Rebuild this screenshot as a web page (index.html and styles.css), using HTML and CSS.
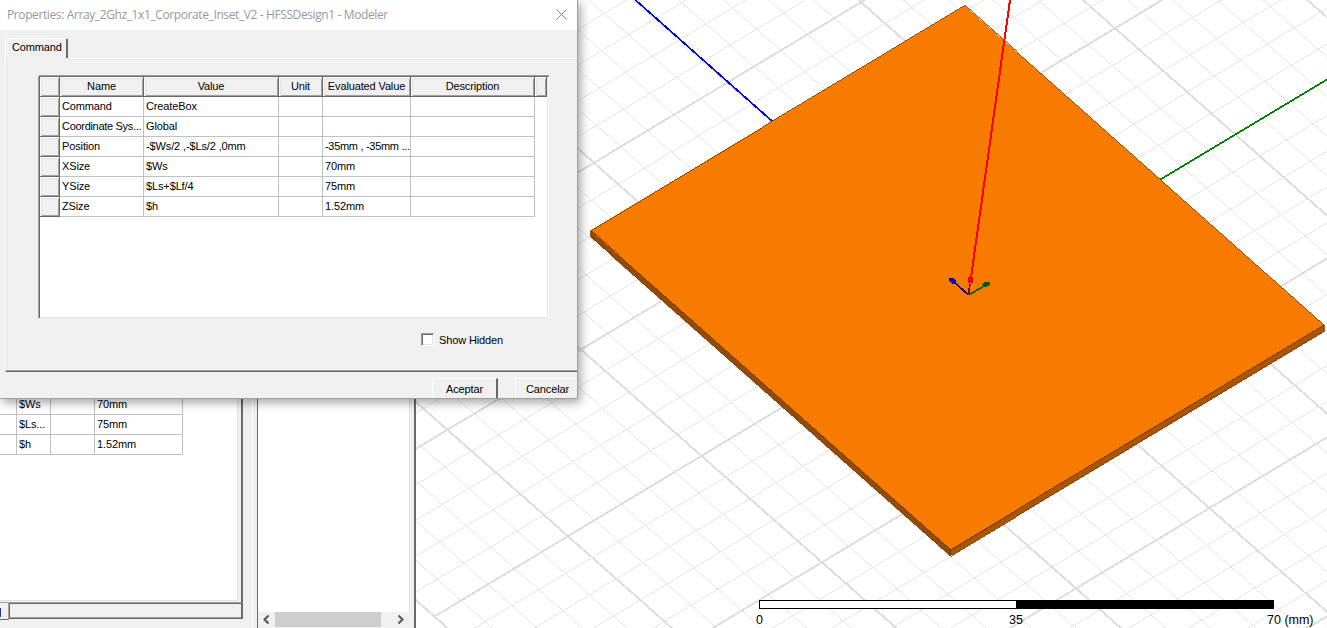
FILE: index.html
```html
<!DOCTYPE html>
<html lang="en">
<head>
<meta charset="utf-8">
<title>Modeler</title>
<link rel="stylesheet" href="styles.css">
</head>
<body>
<div class="app">
  <section class="props">
    <div class="props-page">
      <div class="mini">
        <i></i><span>$Ws</span><i></i><span>70mm</span>
        <i></i><span>$Ls...</span><i></i><span>75mm</span>
        <i></i><span>$h</span><i></i><span>1.52mm</span>
      </div>
    </div>
    <div class="props-foot"><div class="foot-tab"><b></b></div><div class="foot-bar"></div></div>
  </section>
  <div class="splitter"></div>
  <section class="output">
    <div class="output-page"></div>
    <div class="scroll">
      <svg width="17" height="15" viewBox="0 0 17 15"><path d="M10.500 3.500 6.500 7.500 10.500 11.500"/></svg>
      <div class="thumb"></div>
      <svg width="17" height="15" viewBox="0 0 17 15"><path d="M6.500 3.500 10.500 7.500 6.500 11.500"/></svg>
    </div>
  </section>
  <section class="view">
    <svg class="scene" width="911" height="628" viewBox="416 0 911 628">
      <g class="grid" transform="matrix(24.1 21.28 26.7 -16.06 968.5 295.3)">
        <path class="minor" d="M-20-20h40m-40 1h40m-40 1h40m-40 1h40m-40 1h40m-40 1h40m-40 1h40m-40 1h40m-40 1h40m-40 1h40m-40 1h40m-40 1h40m-40 1h40m-40 1h40m-40 1h40m-40 1h40m-40 1h40m-40 1h40m-40 1h40m-40 1h40m-40 1h40m-40 1h40m-40 1h40m-40 1h40m-40 1h40m-40 1h40m-40 1h40m-40 1h40m-40 1h40m-40 1h40m-40 1h40m-40 1h40m-40 1h40m-40 1h40m-40 1h40m-40 1h40m-40 1h40m-40 1h40m-40 1h40m-40 1h40m-40 1h40"/>
        <path class="minor" d="M-20-20v40m1-40v40m1-40v40m1-40v40m1-40v40m1-40v40m1-40v40m1-40v40m1-40v40m1-40v40m1-40v40m1-40v40m1-40v40m1-40v40m1-40v40m1-40v40m1-40v40m1-40v40m1-40v40m1-40v40m1-40v40m1-40v40m1-40v40m1-40v40m1-40v40m1-40v40m1-40v40m1-40v40m1-40v40m1-40v40m1-40v40m1-40v40m1-40v40m1-40v40m1-40v40m1-40v40m1-40v40m1-40v40m1-40v40m1-40v40m1-40v40"/>
        <path class="major" d="M-20-20h40m-40 5h40m-40 5h40m-40 5h40m-40 5h40m-40 5h40m-40 5h40m-40 5h40m-40 5h40M-20-20v40m5-40v40m5-40v40m5-40v40m5-40v40m5-40v40m5-40v40m5-40v40m5-40v40"/>
      </g>
      <path class="axis blue" d="M635.500 0 772.500 121.500"/>
      <path class="axis green" d="M1160.500 179.500 1327 79.500"/>
      <g class="solid">
        <path fill="#944a00" d="M590.500 230.500 950.500 549.500V556L590.500 237Z"/>
        <path fill="#ab5500" d="M950.500 549.500 1324 325V331.500L950.500 556Z"/>
        <path fill="#f67b00" d="M964.500 5.500 1324 325 950.500 549.500 590.500 230.500Z"/>
      </g>
      <path class="axis red" d="M1010 0 970.500 281"/>
      <path class="axis maroon" d="M970 284 968.500 294"/>
      <path class="tip" fill="#f00000" d="M968 277h5v6h-5z"/>
      <path class="axis navy" d="M968.500 295 953 281"/>
      <path class="tip" fill="#0000b4" d="M949 278h5l2 3-3 3h-1l-3-3z"/>
      <path class="axis dark" d="M968.500 295 986 285"/>
      <path class="tip" fill="#005a00" d="M990 282v3l-4 2h-2l-2-3 3-2z"/>
    </svg>
    <div class="scale">
      <div class="scale-bar"></div>
      <div class="scale-labels"><span>0</span><span>35</span><span>70 (mm)</span></div>
    </div>
  </section>
</div>

<div class="dialog">
  <header class="title"><span>Properties: Array_2Ghz_1x1_Corporate_Inset_V2 - HFSSDesign1 - Modeler</span>
    <svg width="11" height="11" viewBox="0 0 11 11"><path d="M.5.5l10 10M10.500.5l-10 10"/></svg>
  </header>
  <div class="tabs"><div class="tab">Command</div><div class="tab-line"></div></div>
  <div class="page">
    <div class="table">
      <div class="row head"><b></b><b>Name</b><b>Value</b><b>Unit</b><b>Evaluated Value</b><b>Description</b><b></b></div>
      <div class="row"><b></b><span>Command</span><span>CreateBox</span><span></span><span></span><span></span></div>
      <div class="row"><b></b><span class="long">Coordinate Sys...</span><span>Global</span><span></span><span></span><span></span></div>
      <div class="row"><b></b><span>Position</span><span>-$Ws/2 ,-$Ls/2 ,0mm</span><span></span><span class="long">-35mm , -35mm ...</span><span></span></div>
      <div class="row"><b></b><span>XSize</span><span>$Ws</span><span></span><span>70mm</span><span></span></div>
      <div class="row"><b></b><span>YSize</span><span>$Ls+$Lf/4</span><span></span><span>75mm</span><span></span></div>
      <div class="row"><b></b><span>ZSize</span><span>$h</span><span></span><span>1.52mm</span><span></span></div>
    </div>
    <label class="check"><i></i>Show Hidden</label>
  </div>
  <footer class="actions"><div class="button">Aceptar</div><div class="button cut">Cancelar</div></footer>
</div>
</body>
</html>
```
FILE: styles.css
```css
* { box-sizing: border-box; }
body { margin: 0; width: 1327px; height: 628px; overflow: hidden; background: #f0f0f0; color: #000; font: 11px/20px "Liberation Sans", Arial, sans-serif; letter-spacing: -.13px; white-space: nowrap; }
.app { display: flex; height: 628px; }

.props { width: 243px; height: 620px; display: flex; flex-direction: column; }
.props-page { height: 603px; flex: none; padding-top: 395px; background: #fff; border-right: 2px solid #696969; border-bottom: 1px solid #a0a0a0; box-shadow: inset -3px -1px #f0f0f0, inset -4px -2px #e3e3e3; }
.mini { display: grid; grid-template-columns: 17px 34px 44px 88px; grid-auto-rows: 20px; }
.mini > * { border-right: 1px solid #c0c0c0; border-bottom: 1px solid #c0c0c0; padding-left: 2px; line-height: 19px; }
.props-foot { display: flex; height: 17px; flex: none; }
.foot-tab { width: 9px; height: 17px; padding-top: 5px; border-right: 1px solid #a0a0a0; border-bottom: 1px solid #696969; }
.foot-tab b { display: block; width: 1px; height: 9px; background: #1c3494; }
.foot-bar { width: 234px; height: 16px; border: 1px solid #696969; border-right-width: 2px; box-shadow: inset 0 -1px #a0a0a0; }

.splitter { width: 14px; background: #f0f0f0; border-right: 4px solid #f0f0f0; box-shadow: inset -1px 0 #fff; }
.output { width: 159px; border-left: 1px solid #696969; border-right: 2px solid #696969; background: #f0f0f0; }
.output-page { height: 612px; width: 152px; background: #fff; border-right: 1px solid #e3e3e3; }
.scroll { display: flex; width: 151px; height: 15px; background: #f0f0f0; justify-content: space-between; }
.scroll svg { fill: none; stroke: #555; stroke-width: 2; }
.thumb { width: 106px; margin-right: 11px; background: #cdcdcd; }

.view { width: 911px; height: 628px; background: #fff; position: relative; }
.scene { display: block; }
.grid path { fill: none; stroke: #dedede; vector-effect: non-scaling-stroke; shape-rendering: crispEdges; }
.grid .minor { stroke-width: .9px; stroke: #e2e2e2; }
.grid .major { stroke-width: 2px; }
.axis { fill: none; stroke-width: 1.700; shape-rendering: crispEdges; }
.blue { stroke: #0000f0; }
.green { stroke: #008000; }
.red { stroke: #f00; stroke-width: 2; }
.maroon { stroke: #900000; }
.navy { stroke: #0000a0; }
.dark { stroke: #006400; }
.tip { shape-rendering: crispEdges; }
.solid path { stroke: #6e3700; stroke-width: .8; shape-rendering: crispEdges; }
.scale { position: absolute; left: 343px; top: 600px; width: 515px; }
.scale-bar { height: 9px; border: 1px solid #000; background: linear-gradient(90deg, #fff 256px, #000 256px); }
.scale-labels { display: grid; grid-template-columns: 253px 258px 60px; margin-left: -3px; font-size: 12.500px; letter-spacing: 0; line-height: 22px; }

.dialog { position: absolute; left: 0; top: 0; width: 578px; height: 399px; background: #f0f0f0; border-right: 1px solid #a0a0a0; border-bottom: 1px solid #a0a0a0; box-shadow: 2px 3px 10px rgba(0,0,0,.4); }
.title { display: flex; justify-content: space-between; height: 30px; padding: 0 10px 0 7px; background: #fff; color: #999; font: 12px/30px "Open Sans", "Noto Sans", sans-serif; letter-spacing: -.39px; }
.title svg { margin-top: 9px; fill: none; stroke: #888; stroke-width: 1; }
.tabs { display: flex; height: 29px; padding: 8px 0 0 5px; }
.tab { width: 63px; height: 20px; padding-left: 6px; line-height: 17px; border-top: 1px solid #fff; border-left: 1px solid #fff; border-right: 2px solid #696969; border-radius: 2px 2px 0 0; }
.tab-line { flex: 1; border-bottom: 1px solid #fff; box-shadow: 0 1px #e3e3e3; }
.page { height: 313px; margin-left: 5px; padding: 17px 0 0 33px; border-left: 1px solid #fff; border-bottom: 1px solid #696969; box-shadow: inset 0 -1px #a0a0a0, inset 1px 0 #e3e3e3; }
.table { width: 510px; height: 242px; background: #fff; border-left: 1px solid #696969; border-top: 1px solid #696969; border-right: 1px solid #fff; box-shadow: 0 -1px #a0a0a0, -1px 0 #a0a0a0, inset -1px -1px #e3e3e3; }
.row { display: grid; grid-template-columns: 20px 84px 135px 44px 88px 124px 12px; height: 20px; }
.row span { height: 20px; padding-left: 2px; line-height: 19px; border-right: 1px solid #c0c0c0; border-bottom: 1px solid #c0c0c0; }
.row .long { letter-spacing: -.3px; }
.row b { height: 20px; background: #f0f0f0; font-weight: normal; line-height: 19px; text-align: center; border-right: 1px solid #696969; border-bottom: 1px solid #696969; box-shadow: inset 1px 1px #fff, inset 2px 2px #e3e3e3, inset -1px -1px #a0a0a0; }
.check { display: flex; align-items: center; gap: 5px; margin: 13px 0 0 382px; height: 18px; width: 90px; }
.check i { width: 13px; height: 13px; background: #fff; border: 1px solid #a0a0a0; border-right-color: #fff; border-bottom-color: #fff; box-shadow: inset 1px 1px #696969, inset -1px -1px #e3e3e3; margin-bottom: 2px; }
.actions { display: flex; gap: 17px; padding: 6px 0 0 432px; height: 26px; overflow: hidden; }
.button { width: 66px; flex: none; height: 20px; text-align: center; line-height: 21px; border-left: 1px solid #fff; border-top: 1px solid #fff; border-right: 2px solid #696969; }
.cut { width: 62px; padding-left: 2px; border-right: 0; }
```
